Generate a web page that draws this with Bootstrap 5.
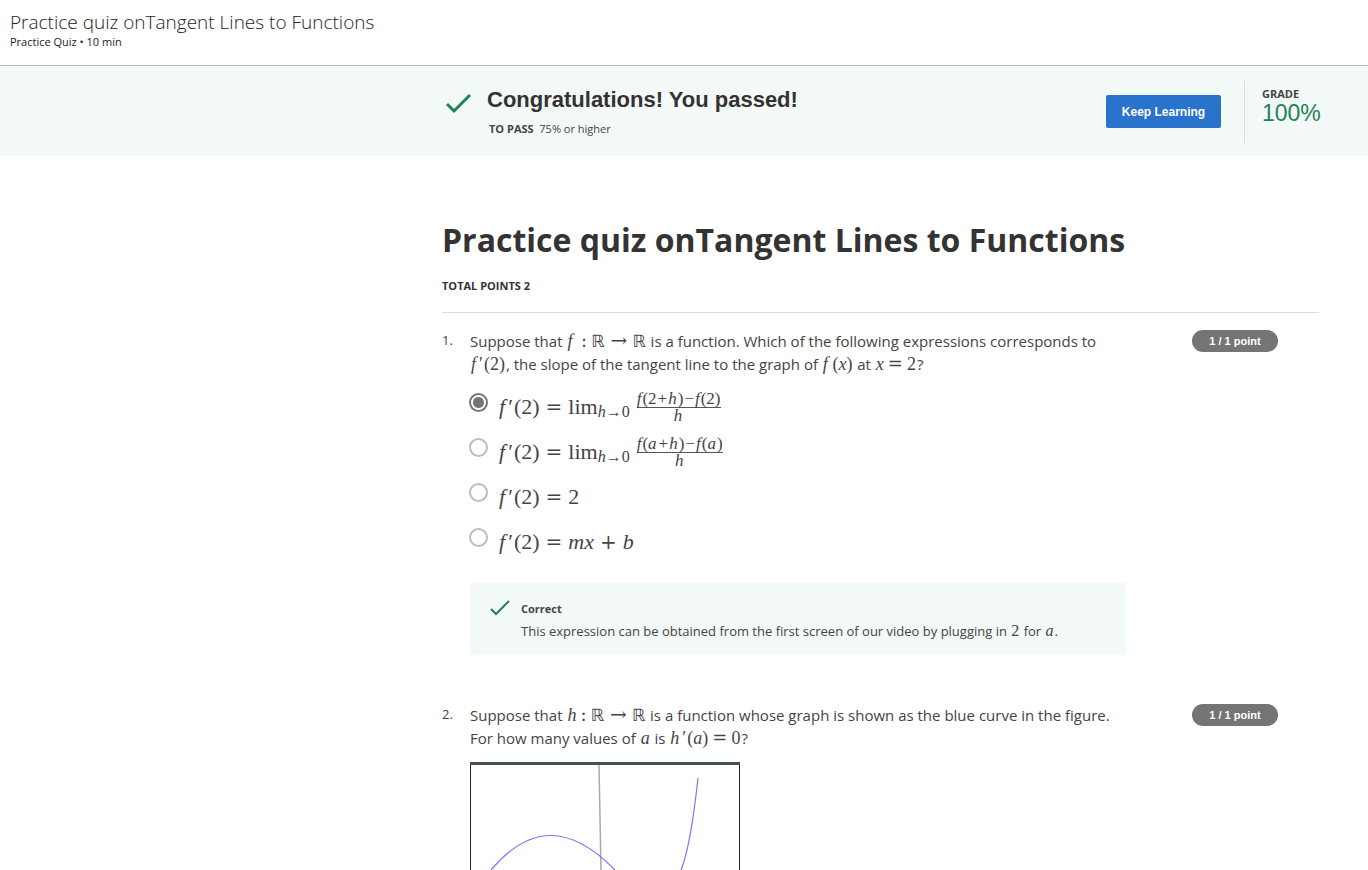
<!DOCTYPE html>
<html lang="en">
<head>
<meta charset="utf-8">
<meta name="viewport" content="width=device-width, initial-scale=1">
<title>Practice quiz onTangent Lines to Functions</title>
<link href="https://cdn.jsdelivr.net/npm/bootstrap@5.3.0/dist/css/bootstrap.min.css" rel="stylesheet">
<style>
body{font-family:"Open Sans",sans-serif;font-size:15px;line-height:23px;color:#444;background:#fff}
.topbar{height:66px;padding:10px;border-bottom:1px solid #bbb;color:#222}
.topbar h2{font-size:19px;line-height:24px;font-weight:300;margin:0}
.topbar p{font-size:11px;line-height:16px;margin:0}
.page-col{padding-left:442px;padding-right:49px}
.result{background:#f3f9f7;height:90px;padding-top:1px}
.result h3{font-family:"Liberation Sans",Arial,sans-serif;font-size:22px;line-height:26px;font-weight:700;color:#333;margin:0}
.pass-line{padding:8px 0 0 2px}
.fine{font-size:11px;line-height:16px}
.keep{font-family:"Liberation Sans",Arial,sans-serif;font-size:12px;line-height:16px;font-weight:700;width:115px;height:33px;padding:0;border:0;border-radius:2px;background:#2a73cc;color:#fff}
.grade{height:62px;border-left:1px solid #ddd;padding:5px 0 0 17px;margin-left:23px;width:75px}
.grade-value{font-size:23px;line-height:22px;color:#1f8354;font-family:"Liberation Sans",Arial,sans-serif}
.quiz-title{font-size:32px;line-height:40px;font-weight:700;color:#333;margin:0}
.total{font-size:11px;line-height:16px;font-weight:700;margin:18px 0 0;color:#333}
.head{padding-top:64px;padding-bottom:18px;border-bottom:1px solid #ddd}
.question{padding-top:17px}
.question + .question{padding-top:49px}
.num{width:28px;font-size:13px;line-height:20px;flex:none}
.q-body{flex:0 1 656px;min-width:0}
.points{font-family:"Liberation Sans",Arial,sans-serif;font-size:11px;line-height:22px;font-weight:700;background:#757575;color:#fff;border-radius:11px;width:86px;text-align:center;flex:none;margin-right:41px}
.math{font-family:"Liberation Serif",serif;font-size:18px;line-height:20px;white-space:nowrap;padding:0 1px}
.rel{font-family:"DejaVu Serif",serif;font-weight:400}
.math .rel{margin:0 4px}
.prime{margin:0 1px 0 3px}
.math .bb{font-family:"DejaVu Sans",sans-serif;font-size:17px}
.math .arrow{font-family:"DejaVu Serif",serif;font-size:20px;margin:0 5px 0 6px}
.options{padding:17px 0 10px}
.option{height:45px}
.option input{appearance:none;width:19px;height:19px;margin:0 0 0 -1px;border:2px solid #bdbdbd;border-radius:50%;flex:none;background:#fff}
.option input:checked{border-color:#757575;background:radial-gradient(circle,#757575 5px,#fff 6px)}
.option label{font-family:"Liberation Serif",serif;font-size:22px;line-height:28px;padding:0 0 0 11px;white-space:nowrap;display:flex}
.option .rel{font-size:20px;margin:0 6px}
.sub-script{font-size:16px;padding-top:5px;margin-right:7px}
.fraction{font-size:17px;line-height:16px;text-align:center;margin-top:-2px}
.fraction span{display:block}
.fraction .top{border-bottom:1px solid #555;line-height:16px}
.fraction b{font-weight:400;margin:0 1px}
.fraction i{margin-right:1px}
.feedback{background:#f3f9f7;padding:16px 20px 12px;min-height:72px;font-size:13px;line-height:24px}
.feedback h4{font-size:11px;line-height:20px;font-weight:700;margin:0}
.feedback .note{padding-left:11px}
.feedback .math{font-size:16px}
.graph{margin-top:12px}
</style>
</head>
<body>
<header class="topbar"><h2>Practice quiz onTangent Lines to Functions</h2><p>Practice Quiz • 10 min</p></header>
<section class="result page-col d-flex align-items-center">
  <svg class="ms-1 me-3 mb-3" width="25" height="21" viewBox="0 0 25 21" fill="none" stroke="#1f8354" stroke-width="3" aria-hidden="true"><path d="M1 11 8 18 24 2"/></svg>
  <div class="flex-grow-1"><h3>Congratulations! You passed!</h3><div class="fine pass-line"><strong>TO PASS</strong>&nbsp; 75% or higher</div></div>
  <button class="btn keep" type="button">Keep Learning</button>
  <div class="grade"><div class="fine fw-bold">GRADE</div><div class="grade-value">100%</div></div>
</section>
<main class="page-col">
  <div class="head"><h1 class="quiz-title">Practice quiz onTangent Lines to Functions</h1><p class="total">TOTAL POINTS 2</p></div>
  <section class="question d-flex align-items-start justify-content-between">
    <div class="d-flex flex-grow-1">
      <div class="num">1.</div>
      <div class="q-body">
        <div>Suppose that <span class="math"><i>f</i> <span class="rel">:</span><span class="bb">ℝ</span><span class="arrow">→</span><span class="bb">ℝ</span></span> is a function. Which of the following expressions corresponds to <span class="math"><i>f</i><span class="prime">′</span>(2)</span>, the slope of the tangent line to the graph of <span class="math"><i>f</i> (<i>x</i>)</span> at <span class="math"><i>x</i><span class="rel">=</span>2</span>?</div>
        <div class="options">
          <div class="option d-flex"><input type="radio" name="q1" id="a1" checked><label for="a1"><i>f</i><span class="prime">′</span>(2)<span class="rel">=</span>lim<span class="sub-script"><i>h</i>→0</span><span class="fraction"><span class="top"><i>f</i>(2<b>+</b><i>h</i>)<b>−</b><i>f</i>(2)</span><span><i>h</i></span></span></label></div>
          <div class="option d-flex"><input type="radio" name="q1" id="a2"><label for="a2"><i>f</i><span class="prime">′</span>(2)<span class="rel">=</span>lim<span class="sub-script"><i>h</i>→0</span><span class="fraction"><span class="top"><i>f</i>(<i>a</i><b>+</b><i>h</i>)<b>−</b><i>f</i>(<i>a</i>)</span><span><i>h</i></span></span></label></div>
          <div class="option d-flex"><input type="radio" name="q1" id="a3"><label for="a3"><i>f</i><span class="prime">′</span>(2)<span class="rel">=</span>2</label></div>
          <div class="option d-flex"><input type="radio" name="q1" id="a4"><label for="a4"><i>f</i><span class="prime">′</span>(2)<span class="rel">=</span><i>mx</i><span class="rel">+</span><i>b</i></label></div>
        </div>
        <div class="feedback d-flex">
          <svg width="20" height="20" viewBox="0 0 20 20" fill="none" stroke="#1f8354" stroke-width="2" aria-hidden="true"><path d="M1 10 6 15 19 2"/></svg>
          <div class="note"><h4>Correct</h4><div>This expression can be obtained from the first screen of our video by plugging in <span class="math">2</span> for <span class="math"><i>a</i></span>.</div></div>
        </div>
      </div>
    </div>
    <div class="points">1 / 1 point</div>
  </section>
  <section class="question d-flex align-items-start justify-content-between">
    <div class="d-flex flex-grow-1">
      <div class="num">2.</div>
      <div class="q-body">
        <div>Suppose that <span class="math"><i>h</i><span class="rel">:</span><span class="bb">ℝ</span><span class="arrow">→</span><span class="bb">ℝ</span></span> is a function whose graph is shown as the blue curve in the figure. For how many values of <span class="math"><i>a</i></span> is <span class="math"><i>h</i><span class="prime">′</span>(<i>a</i>)<span class="rel">=</span>0</span>?</div>
        <svg class="graph d-block" width="270" height="108" viewBox="0 0 270 108" fill="none" role="img" aria-label="Graph of h"><path d="M.5 0V108M269.500 0V108" stroke="#222"/><path d="M0 1.500H270" stroke="#465156" stroke-width="3"/><path d="M129 3 131 108" stroke="#aaa" stroke-width="1.500"/><path d="M21 108C60 62 100 62 145 108M211 108C218 91 223 62 228 16" stroke="#7676ff" stroke-width="1.200"/></svg>
      </div>
    </div>
    <div class="points">1 / 1 point</div>
  </section>
</main>
<script src="https://cdn.jsdelivr.net/npm/bootstrap@5.3.0/dist/js/bootstrap.bundle.min.js"></script>
</body>
</html>
